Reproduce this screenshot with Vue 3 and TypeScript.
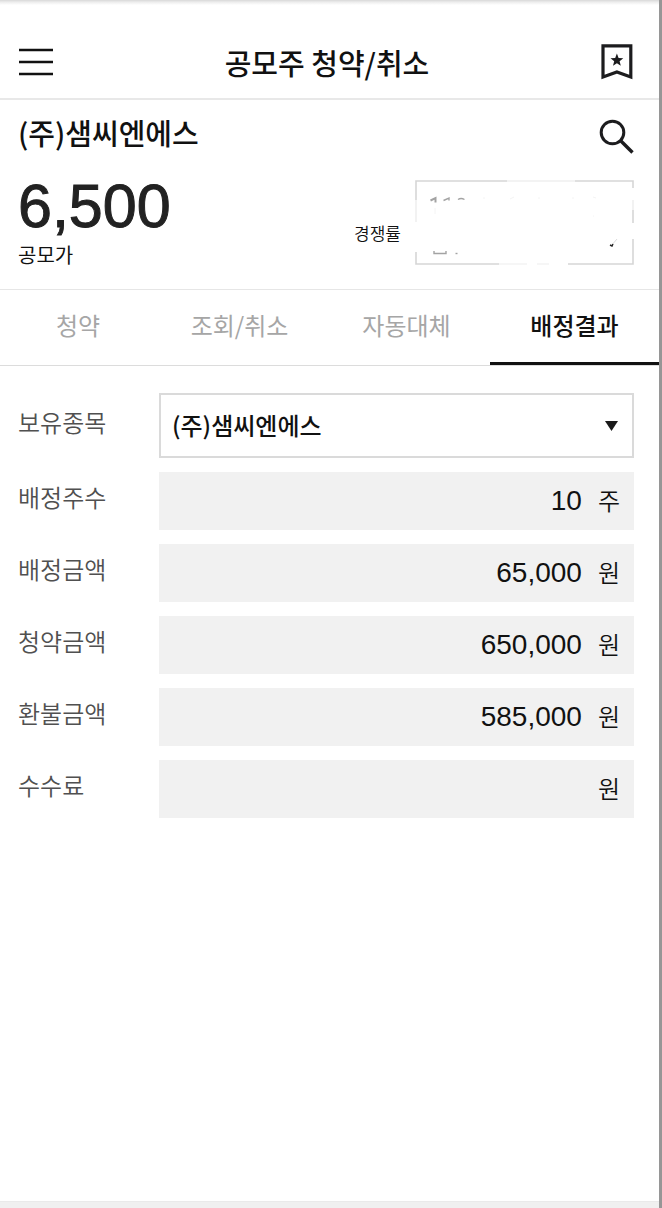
<script setup lang="ts">
import { ref } from 'vue'

interface Tab {
  id: string
  label: string
}

interface ResultRow {
  id: string
  label: string
  value: string
  unit: string
}

const tabs: Tab[] = [
  { id: 'apply', label: '청약' },
  { id: 'history', label: '조회/취소' },
  { id: 'transfer', label: '자동대체' },
  { id: 'result', label: '배정결과' },
]

const rows: ResultRow[] = [
  { id: 'shares', label: '배정주수', value: '10', unit: '주' },
  { id: 'allotted', label: '배정금액', value: '65,000', unit: '원' },
  { id: 'subscribed', label: '청약금액', value: '650,000', unit: '원' },
  { id: 'refund', label: '환불금액', value: '585,000', unit: '원' },
  { id: 'fee', label: '수수료', value: '', unit: '원' },
]

const stocks: string[] = ['(주)샘씨엔에스']
const activeTab = ref<string>('result')
const stock = ref<string>(stocks[0])
</script>

<template>
  <div class="screen">
    <header class="topbar">
      <button class="icon-button" type="button" aria-label="메뉴">
        <svg width="34" height="28" viewBox="0 0 34 28">
          <path d="M0 2H34M0 14H34M0 26H34" fill="none" stroke="#111" stroke-width="2.7" />
        </svg>
      </button>
      <h1 class="title">공모주 청약/취소</h1>
      <button class="icon-button" type="button" aria-label="관심종목">
        <svg width="32" height="36" viewBox="0 0 32 36">
          <path d="M2 1.8H29.8V33L15.9 28L2 33Z" fill="none" stroke="#1c1c1e" stroke-width="3.2" />
          <path
            d="M15.9 9.6L17.6 14L22.3 14.2L18.6 17.2L19.8 21.8L15.9 19.2L12 21.8L13.2 17.2L9.5 14.2L14.2 14Z"
            fill="#1c1c1e"
          />
        </svg>
      </button>
    </header>

    <section class="summary">
      <div class="summary-head">
        <h2 class="company">(주)샘씨엔에스</h2>
        <button class="icon-button" type="button" aria-label="종목 검색">
          <svg width="35" height="35" viewBox="0 0 35 35">
            <circle cx="13.5" cy="13.5" r="11.3" fill="none" stroke="#1c1c1e" stroke-width="3" />
            <path d="M21.7 21.7L33.500 33.500" fill="none" stroke="#1c1c1e" stroke-width="3.4" />
          </svg>
        </button>
      </div>
      <div class="summary-body">
        <div class="price">
          <strong class="price-value">6,500</strong>
          <span class="price-label">공모가</span>
        </div>
        <div class="rate">
          <span class="rate-label">경쟁률</span>
          <svg class="rate-box" width="219" height="85" viewBox="0 0 219 85" role="img" aria-label="경쟁률">
            <g fill="none" stroke="#d6d6d6" stroke-width="1.6">
              <path d="M1 20V1H92M160 1H218V8M218 30V43M218 59V84H153M84 84H1V72" />
              <path d="M92 1H160M1 20V42M218 20V30" stroke="#efefef" />
              <path d="M84 84H112M122 84H134" stroke="#f3f3f3" />
            </g>
            <g fill="none" stroke="#a3a3a3" stroke-width="1.4">
              <path d="M15.500 20.500L20.500 18V22.500" stroke-width="2" />
              <path d="M28.500 20.500L34 18V20.500" />
              <path d="M43 19.500Q46 17.500 49.500 19.500" />
              <path d="M19 71V73.500H31V71" />
              <path d="M40.500 73.500H42.500" />
            </g>
            <path d="M20 28V34M68 18H70M95 19L99 17M123 18H125M157 18H159M178 17L181 18M178 36H179" fill="none" stroke="#f4f4f4" />
            <path d="M196 66L202 59" fill="none" stroke="#dcdcdc" />
            <path d="M195 65L197 66L198 64" fill="none" stroke="#222" stroke-width="1.4" />
          </svg>
        </div>
      </div>
    </section>

    <nav class="tabs" role="tablist">
      <button
        v-for="tab in tabs"
        :key="tab.id"
        class="tab"
        :class="{ active: tab.id === activeTab }"
        type="button"
        role="tab"
        :aria-selected="tab.id === activeTab"
        @click="activeTab = tab.id"
      >
        {{ tab.label }}
      </button>
    </nav>

    <main class="form">
      <div class="row">
        <label class="row-label" for="stock">보유종목</label>
        <div class="select-wrap">
          <select id="stock" v-model="stock" class="select">
            <option v-for="name in stocks" :key="name" :value="name">{{ name }}</option>
          </select>
          <svg class="caret" width="13" height="10" viewBox="0 0 13 10">
            <path d="M0 0H13L6.500 10Z" fill="#1a1a1a" />
          </svg>
        </div>
      </div>
      <div v-for="row in rows" :key="row.id" class="row">
        <label class="row-label" :for="row.id">{{ row.label }}</label>
        <div class="field">
          <input :id="row.id" class="field-value" type="text" readonly :value="row.value" />
          <span class="field-unit">{{ row.unit }}</span>
        </div>
      </div>
    </main>

    <footer class="bottom-bar"></footer>
  </div>
</template>

<style>
body {
  margin: 0;
  background: #fff;
}
</style>

<style scoped>
.screen {
  display: flex;
  flex-direction: column;
  min-height: 100vh;
  box-sizing: border-box;
  border-right: 3px solid #969696;
  background: linear-gradient(#d8d8d8, #ececec 2px, #fff 5px);
  color: #111;
  font-family: "Liberation Sans", "Noto Sans CJK KR", sans-serif;
}

button,
select,
input {
  font-family: inherit;
  color: inherit;
}

.icon-button {
  display: flex;
  padding: 0;
  border: 0;
  background: none;
}

.topbar {
  display: flex;
  align-items: center;
  justify-content: space-between;
  box-sizing: border-box;
  height: 100px;
  padding: 26px 26px 0 19px;
  border-bottom: 2px solid #e8e8e8;
}

.title,
.company {
  margin: 0;
  font-family: "Noto Sans CJK KR", sans-serif;
  font-size: 29px;
  font-weight: 500;
  line-height: 40px;
}

.summary {
  box-sizing: border-box;
  height: 190px;
  padding: 12px 25px 0 18px;
  border-bottom: 1px solid #e6e6e6;
}

.summary-head {
  display: flex;
  align-items: center;
  justify-content: space-between;
  height: 48px;
}

.company {
  height: 48px;
}

.summary-body {
  display: flex;
  justify-content: space-between;
  padding-top: 12px;
}

.price {
  display: flex;
  flex-direction: column;
}

.price-value {
  font-size: 61px;
  font-weight: 400;
  line-height: 68px;
  color: #222;
  -webkit-text-stroke: 1px #222;
}

.price-label {
  font-family: "Noto Sans CJK KR", sans-serif;
  font-size: 20px;
  line-height: 30px;
}

.rate {
  display: flex;
  align-items: center;
  gap: 14px;
  height: 101px;
}

.rate-label {
  padding-top: 20px;
  font-family: "Noto Sans CJK KR", sans-serif;
  font-size: 17px;
  font-weight: 350;
  line-height: 24px;
  color: #111;
}

.tabs {
  display: grid;
  grid-template-columns: 156fr 167fr 167fr 169fr;
  height: 75px;
  border-bottom: 1px solid #dcdcdc;
}

.tab {
  padding: 0 0 2px;
  border: 0;
  border-bottom: 3px solid transparent;
  background: none;
  font-family: "Noto Sans CJK KR", sans-serif;
  font-size: 24px;
  line-height: 34px;
  color: #a6a6a6;
}

.tab.active {
  border-bottom-color: #111;
  color: #111;
  font-weight: 500;
}

.form {
  display: flex;
  flex: 1;
  flex-direction: column;
  gap: 14px;
  padding: 27px 25px 27px 18px;
}

.row {
  display: grid;
  grid-template-columns: 141px 1fr;
}

.row-label {
  align-self: center;
  padding-bottom: 8px;
  font-family: "Noto Sans CJK KR", sans-serif;
  font-size: 24px;
  font-weight: 350;
  line-height: 34px;
  color: #505050;
}

.select-wrap {
  position: relative;
}

.select {
  display: block;
  width: 100%;
  height: 65px;
  padding: 0 40px 2px 11px;
  border: 2px solid #dadada;
  border-radius: 0;
  appearance: none;
  background: #fff;
  font-family: "Noto Sans CJK KR", sans-serif;
  font-size: 24px;
  font-weight: 500;
}

.caret {
  position: absolute;
  top: 28px;
  right: 16px;
  pointer-events: none;
}

.field {
  display: flex;
  align-items: center;
  gap: 16px;
  height: 58px;
  padding: 0 14px;
  background: #f1f1f1;
}

.field-value {
  flex: 1;
  min-width: 0;
  padding: 0;
  border: 0;
  outline: 0;
  background: none;
  font-size: 28px;
  line-height: 34px;
  text-align: right;
}

.field-unit {
  padding-bottom: 3px;
  font-family: "Noto Sans CJK KR", sans-serif;
  font-size: 24px;
  font-weight: 350;
  line-height: 34px;
}

.bottom-bar {
  height: 6px;
  border-top: 1px solid #eaeaea;
  background: #f0f0f0;
}
</style>
